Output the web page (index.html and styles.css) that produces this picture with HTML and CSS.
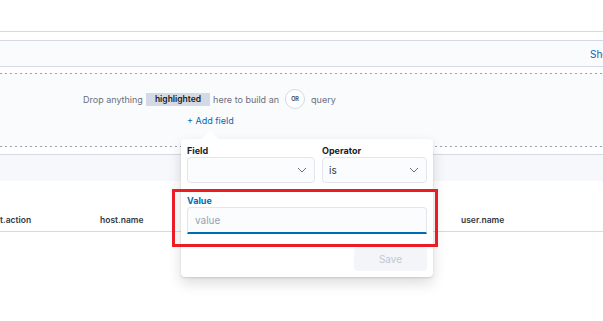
FILE: index.html
```html
<!DOCTYPE html>
<html lang="en">
<head>
    <meta charset="UTF-8">
    <title>Timeline data providers</title>
    <link rel="stylesheet" href="styles.css">
</head>
<body>
    <div class="page">
        <div class="top"></div>
        <div class="spacer"></div>

        <div class="toolbar">
            <a class="toolbar-link">Show query</a>
        </div>

        <div class="drop-zone">
            <div class="drop-line">
                <span>Drop anything</span>
                <span class="highlighted">highlighted</span>
                <span>here to build an</span>
                <span class="or-badge">OR</span>
                <span>query</span>
            </div>
            <a class="add-field">+ Add field</a>
        </div>

        <div class="band"></div>

        <div class="table-header">
            <span class="col col-action">t.action</span>
            <span class="col col-host">host.name</span>
            <span class="col col-user">user.name</span>
        </div>

        <div class="popover">
            <div class="popover-row">
                <div class="form-row">
                    <label class="form-label">Field</label>
                    <div class="select">
                        <span></span>
                        <svg class="chevron" width="10" height="6" viewBox="0 0 10 6"><path d="M1 1l4 4 4-4" fill="none" stroke="#69707d" stroke-width="1"/></svg>
                    </div>
                </div>
                <div class="form-row">
                    <label class="form-label">Operator</label>
                    <div class="select">
                        <span>is</span>
                        <svg class="chevron" width="10" height="6" viewBox="0 0 10 6"><path d="M1 1l4 4 4-4" fill="none" stroke="#69707d" stroke-width="1"/></svg>
                    </div>
                </div>
            </div>
            <div class="form-row value-row">
                <label class="form-label active">Value</label>
                <div class="text-input">value</div>
            </div>
            <div class="popover-footer">
                <button class="save-button" disabled>Save</button>
            </div>
        </div>

        <div class="annotation"></div>
    </div>
</body>
</html>
```

FILE: styles.css
```css
* {
    margin: 0;
    padding: 0;
    box-sizing: border-box;
}

body {
    font-family: Inter, 'Noto Sans', sans-serif;
    color: #343741;
    background: #fff;
    overflow: hidden;
    width: 603px;
    height: 321px;
}

.page {
    position: relative;
    width: 660px;
    height: 321px;
}

.top {
    height: 32px;
    border-bottom: 1px solid #d3dae6;
}

.spacer {
    height: 8px;
}

.toolbar {
    height: 27px;
    background: #fafbfd;
    border-top: 1px solid #d3dae6;
    border-bottom: 1px solid #d3dae6;
    display: flex;
    align-items: center;
    padding-left: 590px;
}

.toolbar-link {
    color: #006bb4;
    font-size: 10px;
    white-space: nowrap;
}

.drop-zone {
    margin-top: 6px;
    height: 74px;
    background-color: #fafbfd;
    background-image:
        repeating-linear-gradient(90deg, #98a2b3 0 2px, transparent 2px 5px),
        repeating-linear-gradient(90deg, #98a2b3 0 2px, transparent 2px 5px);
    background-size: 100% 1px, 100% 1px;
    background-position: top left, bottom left;
    background-repeat: no-repeat;
    padding: 16px 0 0 83px;
}

.drop-line {
    display: flex;
    align-items: center;
    gap: 3px;
    height: 20px;
    font-size: 9px;
    color: #69707d;
}

.highlighted {
    background: #d3dae6;
    color: #1a1c21;
    font-weight: 600;
    font-size: 8.5px;
    padding: 0 9px;
    height: 13px;
    line-height: 13px;
}

.or-badge {
    width: 20px;
    height: 20px;
    border: 1px solid #d3dae6;
    border-radius: 50%;
    background: #fff;
    font-size: 5.5px;
    font-weight: 600;
    color: #343741;
    display: flex;
    align-items: center;
    justify-content: center;
    margin: 0 3px;
}

.add-field {
    display: block;
    margin: 5px 0 0 104px;
    color: #006bb4;
    font-size: 9px;
    line-height: 14px;
}

.band {
    margin-top: 7px;
    height: 27px;
    background: #f7f8fc;
    border-top: 1px solid #d3dae6;
}

.table-header {
    height: 51px;
    border-bottom: 1px solid #d3dae6;
    display: flex;
    align-items: flex-end;
    padding-bottom: 5px;
    font-size: 8.5px;
    font-weight: 600;
    color: #343741;
}

.col {
    display: block;
    line-height: 12px;
}

.col-action {
    width: 100px;
}

.col-host {
    width: 361px;
}

.popover {
    position: absolute;
    left: 181px;
    top: 139px;
    width: 252px;
    height: 138px;
    background: #fff;
    border-radius: 4px;
    box-shadow: 0 1px 2px rgba(0, 0, 0, 0.12), 0 6px 14px rgba(0, 0, 0, 0.14);
    padding: 7px 6px 6px;
}

.popover::before {
    content: '';
    position: absolute;
    top: -8px;
    left: 21px;
    border-left: 8px solid transparent;
    border-right: 8px solid transparent;
    border-bottom: 8px solid #fff;
}

.popover-row {
    display: grid;
    grid-template-columns: 128px 1fr;
    gap: 7px;
}

.form-label {
    display: block;
    font-size: 9px;
    font-weight: 700;
    color: #1a1c21;
    line-height: 10px;
    margin-bottom: 1px;
}

.form-label.active {
    color: #006bb4;
}

.select {
    height: 26px;
    border: 1px solid #e2e6ee;
    border-radius: 4px;
    background: #fbfcfd;
    display: flex;
    align-items: center;
    justify-content: space-between;
    padding: 0 7px 0 6px;
    font-size: 10px;
    color: #343741;
}

.value-row {
    margin-top: 13px;
}

.text-input {
    height: 27px;
    border: 1px solid #e2e6ee;
    border-bottom: 2px solid #006bb4;
    border-radius: 4px 4px 0 0;
    background: #fbfcfd;
    display: flex;
    align-items: center;
    padding-left: 7px;
    font-size: 10px;
    color: #98a2b3;
}

.popover-footer {
    display: flex;
    justify-content: flex-end;
    margin-top: 13px;
}

.save-button {
    width: 73px;
    height: 24px;
    border: none;
    border-radius: 4px;
    background: #f3f5f9;
    color: #c2c8d2;
    font-family: inherit;
    font-size: 10px;
}

.annotation {
    position: absolute;
    left: 172px;
    top: 189px;
    width: 266px;
    height: 58px;
    border: 3px solid #ec1c24;
}
```
